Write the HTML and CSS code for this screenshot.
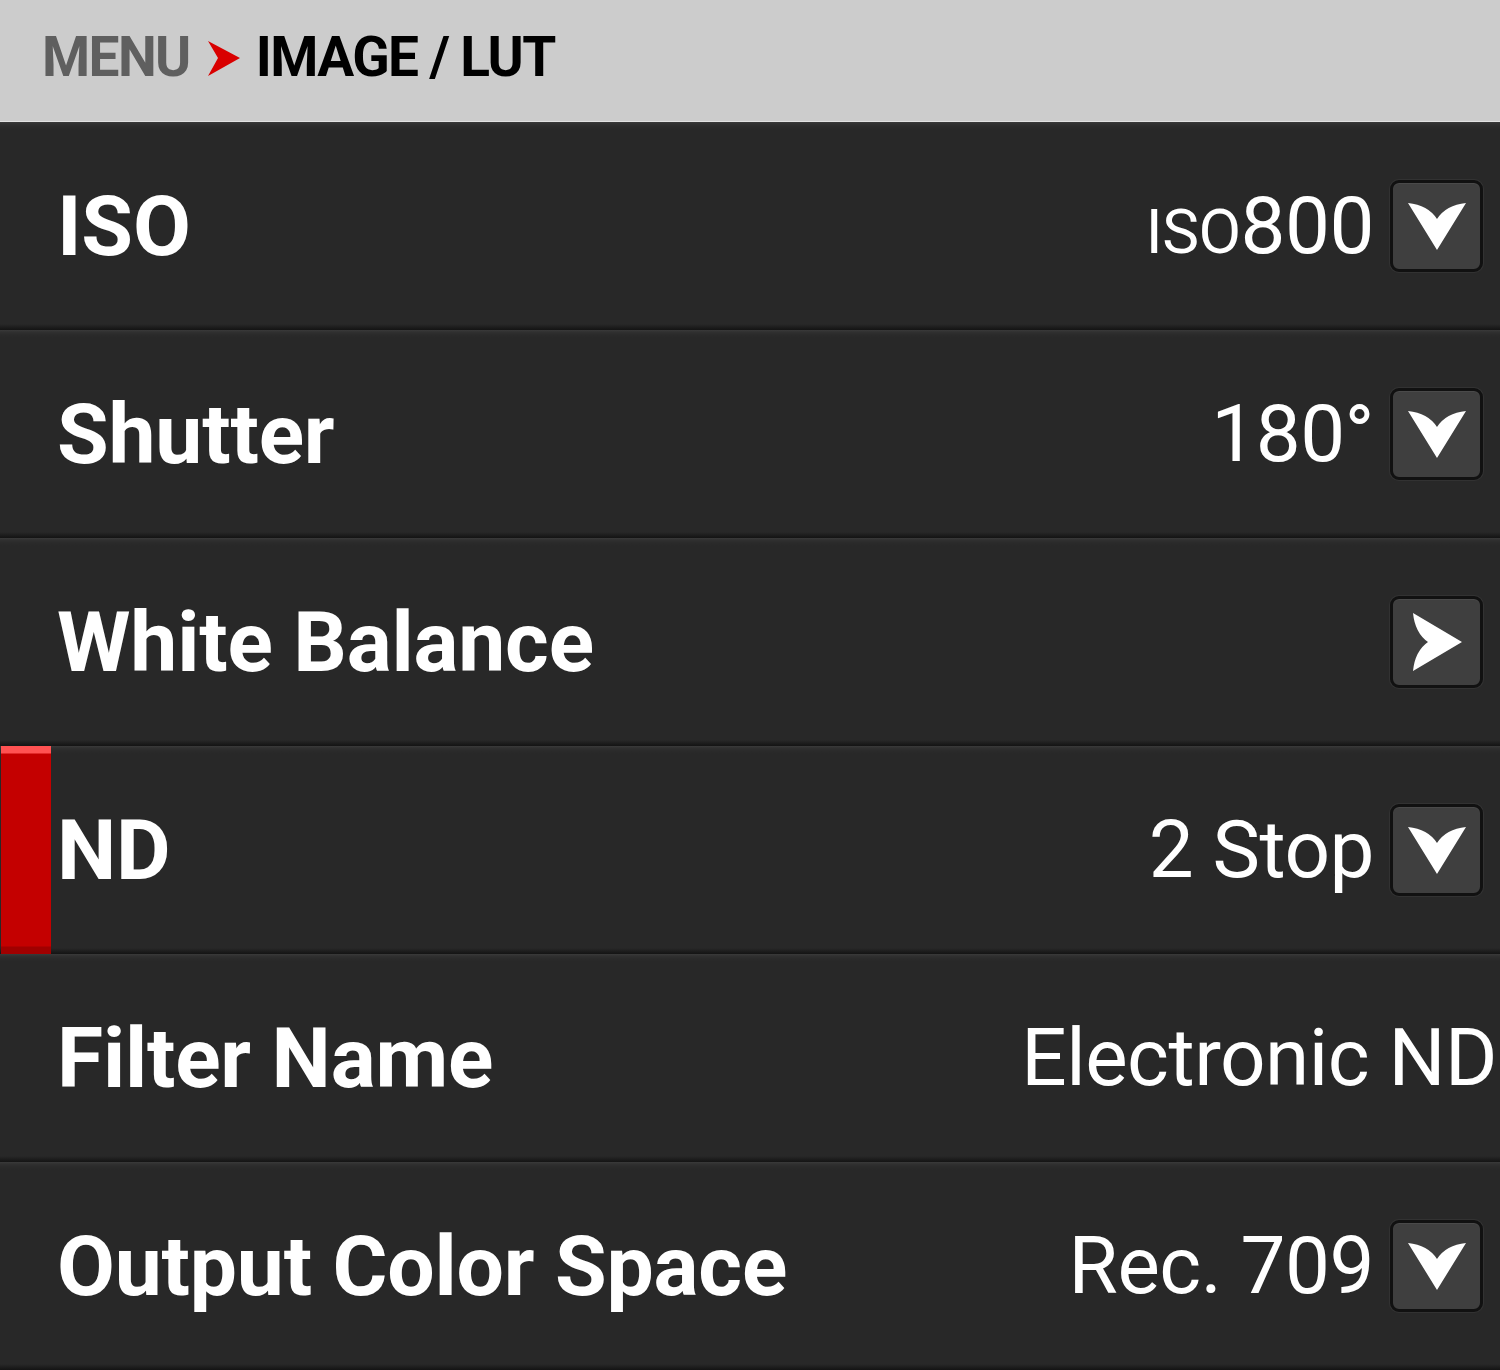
FILE: index.html
```html
<!DOCTYPE html>
<html>
<head>
  <title>Image / LUT</title>
  <link rel="stylesheet" href="styles.css">
</head>
<body>
  <header class="crumbs">
    <span class="crumb-root">MENU</span>
    <svg class="crumb-sep" viewBox="0 0 32 36" width="32" height="36">
      <polygon points="0,0 32,17 0,35 10,17" fill="#d90000"/>
    </svg>
    <span class="crumb-current">IMAGE / LUT</span>
  </header>
  <main class="menu">
    <div class="menu-row">
      <span class="menu-label">ISO</span>
      <span class="menu-value"><span class="value-prefix">ISO</span>800</span>
      <button class="menu-btn">
        <svg viewBox="0 0 86 86" width="86" height="86"><path d="M14 20 Q34 22 43 36 Q52 22 72 20 L43 67 Z" fill="#fff"/></svg>
      </button>
    </div>
    <div class="menu-row">
      <span class="menu-label">Shutter</span>
      <span class="menu-value">180°</span>
      <button class="menu-btn">
        <svg viewBox="0 0 86 86" width="86" height="86"><path d="M14 20 Q34 22 43 36 Q52 22 72 20 L43 67 Z" fill="#fff"/></svg>
      </button>
    </div>
    <div class="menu-row">
      <span class="menu-label">White Balance</span>
      <button class="menu-btn">
        <svg viewBox="0 0 86 86" width="86" height="86"><path d="M19 14 L68 43 L19 72 Q21 52 34 43 Q21 34 19 14 Z" fill="#fff"/></svg>
      </button>
    </div>
    <div class="menu-row is-active">
      <span class="row-marker"></span>
      <span class="menu-label">ND</span>
      <span class="menu-value">2 Stop</span>
      <button class="menu-btn">
        <svg viewBox="0 0 86 86" width="86" height="86"><path d="M14 20 Q34 22 43 36 Q52 22 72 20 L43 67 Z" fill="#fff"/></svg>
      </button>
    </div>
    <div class="menu-row">
      <span class="menu-label">Filter Name</span>
      <span class="menu-value value-plain">Electronic ND</span>
    </div>
    <div class="menu-row">
      <span class="menu-label">Output Color Space</span>
      <span class="menu-value">Rec. 709</span>
      <button class="menu-btn">
        <svg viewBox="0 0 86 86" width="86" height="86"><path d="M14 20 Q34 22 43 36 Q52 22 72 20 L43 67 Z" fill="#fff"/></svg>
      </button>
    </div>
  </main>
</body>
</html>
```

FILE: styles.css
```css
:root {
  --header-grey: #cccccc;
  --row-bg: #282828;
  --btn-bg: #3f3f3f;
  --text-white: #ffffff;
  --accent-red: #c40000;
}

* {
  margin: 0;
  padding: 0;
  box-sizing: border-box;
}

body {
  font-family: Roboto, 'Liberation Sans', sans-serif;
  background: var(--row-bg);
  color: var(--text-white);
  width: 1500px;
  height: 1370px;
  overflow: hidden;
}

/* breadcrumb bar */
.crumbs {
  height: 122px;
  background: var(--header-grey);
  border-bottom: 1px solid #e2e2e2;
  display: flex;
  align-items: center;
  padding-left: 42px;
  padding-bottom: 8px;
  font-weight: 700;
  font-size: 55px;
  letter-spacing: -1.6px;
}

.crumb-root {
  color: #5f5f5f;
}

.crumb-sep {
  margin: 4px 16px 0 18px;
}

.crumb-current {
  color: #000;
}

/* rows */
.menu {
  display: flex;
  flex-direction: column;
}

.menu-row {
  position: relative;
  height: 208px;
  flex-shrink: 0;
  display: flex;
  align-items: center;
  gap: 16px;
  padding: 0 17px 0 57px;
  background: linear-gradient(to bottom,
    #3a3a3a 0, #303030 2px, #2a2a2a 5px, var(--row-bg) 8px,
    var(--row-bg) calc(100% - 6px), #1a1a1a calc(100% - 2px), #141414 100%);
}

.menu-label {
  flex: 1;
  font-size: 84px;
  font-weight: 700;
  letter-spacing: -0.2px;
}

.menu-value {
  font-size: 80px;
  font-weight: 400;
  letter-spacing: -0.5px;
}

.value-prefix {
  font-size: 62px;
}

.value-plain {
  margin-right: -14px;
}

.menu-btn {
  width: 93px;
  height: 92px;
  background: var(--btn-bg);
  border: 3px solid #111;
  border-radius: 9px;
  box-shadow: 0 0 0 1px rgba(255, 255, 255, 0.05), inset 0 1px 0 rgba(255, 255, 255, 0.06);
  display: flex;
  align-items: center;
  justify-content: center;
}

.row-marker {
  position: absolute;
  left: 1px;
  top: 0;
  bottom: 0;
  width: 50px;
  background: linear-gradient(to bottom,
    #ff5252 0, #ff5252 7px, var(--accent-red) 8px,
    var(--accent-red) calc(100% - 8px), #a00000 calc(100% - 7px), #a00000 100%);
}
```
